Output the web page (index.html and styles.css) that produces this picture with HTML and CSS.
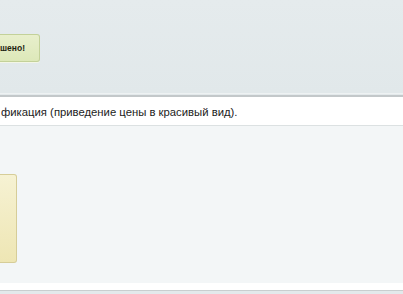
FILE: index.html
```html
<!DOCTYPE html>
<html>
<head>
<meta charset="utf-8">
<link rel="stylesheet" href="styles.css">
</head>
<body>
<div class="page">
  <header class="top">
    <div class="solved">шено!</div>
  </header>
  <div class="title-bar">фикация (приведение цены в красивый вид).</div>
  <section class="panel">
    <div class="note"></div>
  </section>
  <div class="footer-strip"></div>
</div>
</body>
</html>
```
FILE: styles.css
```css
* { box-sizing: border-box; }
html, body { margin: 0; padding: 0; }
body {
  background: #e3e9eb;
  font-family: "Liberation Sans", Arial, sans-serif;
  width: 403px;
  height: 294px;
  overflow: hidden;
}
.page { display: flex; flex-direction: column; }
.top {
  height: 94px;
  padding-top: 34px;
  background: linear-gradient(#e5ebed, #e1e8ea);
  border-bottom: 1px solid #eef2f3;
}
.solved {
  width: 40px;
  height: 28px;
  background: linear-gradient(#e8efcc, #dde8b9);
  border: 1px solid #c3d199;
  border-left: none;
  border-radius: 0 3px 3px 0;
  font-family: "Liberation Sans", Arial, sans-serif;
  font-size: 8.5px;
  font-weight: bold;
  color: #1e2410;
  line-height: 26px;
  white-space: nowrap;
  overflow: hidden;
  box-shadow: 0 1px 0 #f3f6e6;
}
.title-bar {
  margin-top: 1px;
  border-top: 2px solid #c3c8ca;
  height: 31px;
  background: #ffffff;
  border-bottom: 1px solid #dce1e2;
  font-size: 11.3px;
  color: #222;
  line-height: 26px;
  padding-top: 2px;
  padding-left: 1px;
  white-space: nowrap;
  overflow: hidden;
}
.panel {
  height: 157px;
  background: #f3f6f7;
  padding-top: 48px;
}
.note {
  width: 17px;
  height: 89px;
  background: linear-gradient(#f6f2d3, #eee6b4);
  border: 1px solid #d6cd98;
  border-left: none;
  border-radius: 0 3px 3px 0;
}
.footer-strip {
  height: 8px;
  background: #ffffff;
  border-bottom: 1px solid #c9cecf;
}
```
